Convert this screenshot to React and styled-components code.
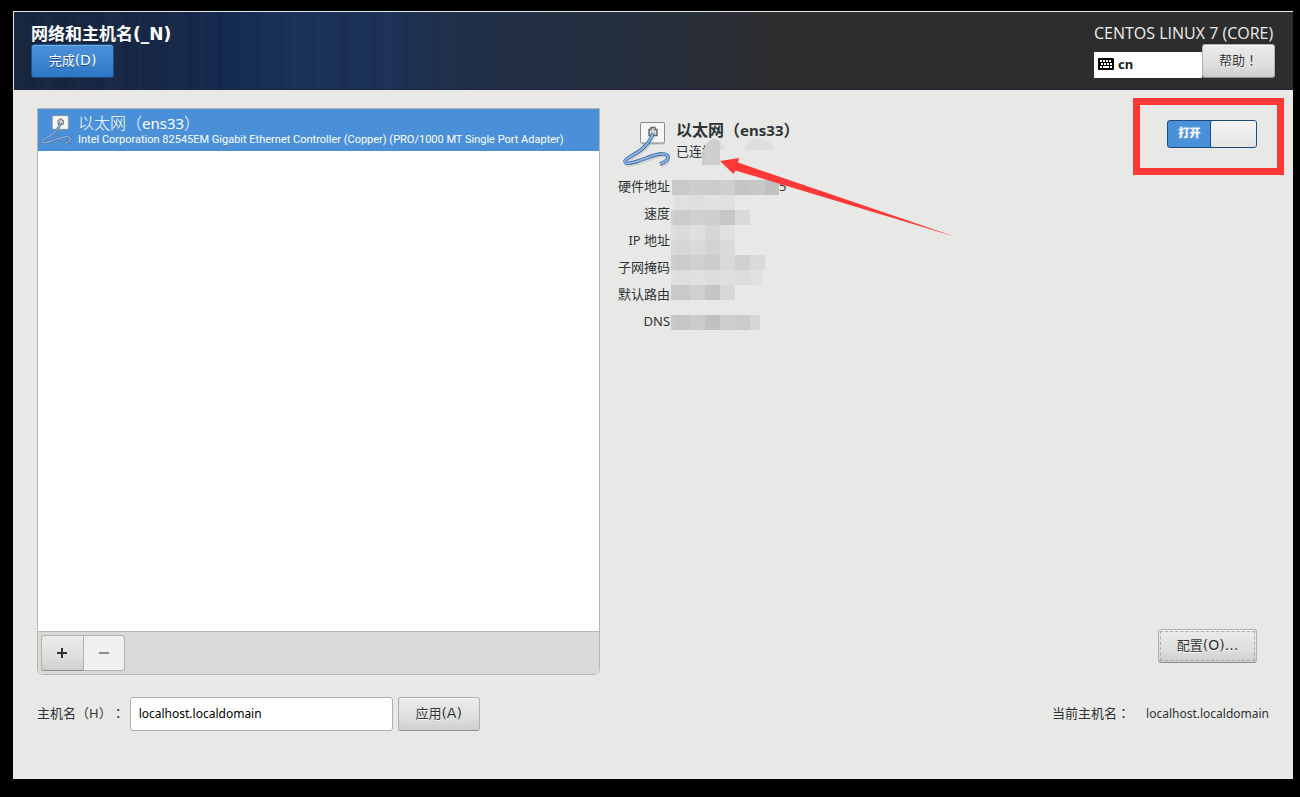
import React, { useState } from "react";
import styled, { createGlobalStyle } from "styled-components";

const GlobalStyle = createGlobalStyle`
  * { box-sizing: border-box; }
  body {
    margin: 0;
    background: #000;
    color: #2e3436;
    font-family: "Noto Sans", "Noto Sans CJK SC", sans-serif;
    font-size: 13px;
    line-height: 18px;
    text-spacing-trim: space-all;
  }
  button, input { font: inherit; color: inherit; }
  h1, h2, p, dl, dd, ul { margin: 0; padding: 0; }
`;

const Screen = styled.div`
  min-height: 100vh;
  padding: 11px 7px 18px 13px;
  display: flex;
`;

const Installer = styled.div`
  flex: 1;
  min-width: 0;
  display: flex;
  flex-direction: column;
  padding: 1px 0 0 1px;
  background: #e8e8e6;
`;

const Header = styled.header`
  display: flex;
  justify-content: space-between;
  align-items: flex-end;
  padding: 12px 18px 11px 17px;
  border-bottom: 1px solid #26233a;
  background:
    linear-gradient(90deg, transparent 380px, #222f44 530px, #242f3e 600px, #282c36 690px, #2d2d2d 780px),
    repeating-linear-gradient(90deg, rgba(60, 100, 160, 0.04) 0 3px, transparent 6px 17px, rgba(0, 0, 20, 0.06) 19px 21px, transparent 24px 31px),
    repeating-linear-gradient(90deg, transparent 0 23px, rgba(70, 110, 170, 0.03) 29px 35px, transparent 43px 67px),
    linear-gradient(90deg, #18253d 0, #172745 120px, #152a50 220px, #1a3058 270px, #1c3154 390px, #222f44 530px);
`;

const HeaderSide = styled.div`
  display: flex;
  flex-direction: column;
  align-items: flex-start;
`;

const Title = styled.h1`
  color: #fff;
  font-size: 17px;
  line-height: 20px;
  font-weight: 600;
`;

const TitleKey = styled.span`
  font-family: "DejaVu Sans", sans-serif;
`;

const ButtonKey = styled.span`
  font-family: "DejaVu Sans", sans-serif;
  font-size: 14px;
`;

const Product = styled.p`
  margin-bottom: 2px;
  color: #eee;
  font-family: "Open Sans", sans-serif;
  font-size: 16px;
  line-height: 18px;
`;

const HeaderTools = styled.div`
  display: flex;
  align-items: flex-end;
`;

const Layout = styled.div`
  display: flex;
  align-items: center;
  gap: 4px;
  width: 108px;
  height: 26px;
  padding: 0 4px 2px;
  background: #fff;
  color: #1a1a1a;
  font-weight: 700;
`;

const Button = styled.button`
  min-width: ${(p) => p.$width}px;
  height: 34px;
  padding: 0 8px 2px;
  border: 1px solid ${(p) => (p.$primary ? "#1c5187" : "#b0b0ac")};
  border-bottom-color: ${(p) => (p.$primary ? "#184a80" : "#8f8f8c")};
  border-radius: 3px;
  background: ${(p) =>
    p.$primary
      ? "linear-gradient(#4a90d9, #3f86d2 50%, #2a76c6)"
      : "linear-gradient(#ebebea, #dfdfde 60%, #cfcfcd)"};
  box-shadow: inset 0 1px ${(p) => (p.$primary ? "#76aee6" : "#f8f8f8")};
  color: ${(p) => (p.$primary ? "#fff" : "#2e3436")};
  text-shadow: 0 1px ${(p) => (p.$primary ? "#1c4a80" : "#fff")};
  ${(p) => p.$focused && "outline: 1px dashed #aaa; outline-offset: -3px;"}
`;

const Main = styled.main`
  flex: 1;
  display: flex;
  flex-direction: column;
  gap: 22px;
  padding: 18px 24px 48px 23px;
`;

const Columns = styled.div`
  flex: 1;
  display: grid;
  grid-template-columns: 6fr 7fr;
  gap: 12px;
`;

const Devices = styled.section`
  display: flex;
  flex-direction: column;
  border: 1px solid #b5b5b2;
  border-radius: 0 0 6px 6px;
  background: #fff;
  overflow: hidden;
`;

const DeviceList = styled.ul`
  flex: 1;
  list-style: none;
`;

const Device = styled.li`
  display: flex;
  align-items: center;
  gap: 6px;
  height: 42px;
  padding: 0 4px 0 2px;
  background: #4a90d9;
  color: #fff;
`;

const DeviceName = styled.p`
  font-size: 16px;
  line-height: 20px;
  font-weight: 300;
`;

const DeviceLatin = styled.span`
  font-size: 15px;
  font-weight: 400;
`;

const DeviceInfo = styled.p`
  font-family: Roboto, sans-serif;
  font-size: 11px;
  line-height: 14px;
  white-space: nowrap;
`;

const Toolbar = styled.div`
  display: flex;
  padding: 3px;
  border-top: 1px solid #b5b5b2;
  background: #d9d9d7;
`;

const ToolButton = styled.button`
  display: grid;
  place-items: center;
  width: ${(p) => (p.disabled ? 41 : 43)}px;
  height: 36px;
  padding: 0 ${(p) => (p.disabled ? 0 : 2)}px 0 0;
  border: 1px solid #b0b0ac;
  border-left-width: ${(p) => (p.disabled ? 0 : 1)}px;
  border-bottom-color: ${(p) => (p.disabled ? "#b0b0ac" : "#8f8f8c")};
  border-radius: ${(p) => (p.disabled ? "0 3px 3px 0" : "3px 0 0 3px")};
  background: ${(p) => (p.disabled ? "#f0f0f0" : "linear-gradient(#ebebea, #dfdfde 60%, #cfcfcd)")};
  color: ${(p) => (p.disabled ? "#8d9091" : "#2e3436")};
`;

const Details = styled.section`
  position: relative;
  display: flex;
  flex-direction: column;
  padding: 12px 12px 12px 0;
`;

const DetailsHead = styled.div`
  display: flex;
  align-items: flex-start;
  justify-content: space-between;
  margin-bottom: 6px;
`;

const Adapter = styled.div`
  display: flex;
  gap: 6px;
  height: 46px;
  padding-left: 10px;
`;

const AdapterName = styled.h2`
  font-size: 16px;
  line-height: 20px;
  font-weight: 700;
`;

const AdapterLatin = styled.span`
  font-size: 15px;
`;

const AdapterState = styled.p`
  line-height: 22px;
`;

const Facts = styled.dl`
  display: grid;
  grid-template-columns: 58px 1fr;
  grid-auto-rows: 27px;
  align-items: center;
`;

const FactName = styled.dt`
  text-align: right;
  white-space: nowrap;
`;

const FactValue = styled.dd`
  padding-left: 109px;
`;

const Redaction = styled.svg`
  position: absolute;
  left: 0;
  top: 0;
  pointer-events: none;
`;

const SwitchLabel = styled.label`
  position: relative;
  display: flex;
`;

const SwitchInput = styled.input`
  appearance: none;
  width: 90px;
  height: 28px;
  margin: 0;
  display: flex;
  justify-content: ${(p) => (p.checked ? "flex-end" : "flex-start")};
  border: 1px solid #1c4a7c;
  border-radius: 3px;
  background: ${(p) => (p.checked ? "#4a90d9" : "#c9c9c7")};
  &::before {
    content: "";
    width: 45px;
    border-left: 1px solid #1c4a7c;
    border-radius: 2px;
    background: linear-gradient(#f5f5f5, #e4e4e3);
  }
`;

const SwitchText = styled.span`
  position: absolute;
  left: 0;
  top: 0;
  width: 45px;
  line-height: 26px;
  text-align: center;
  font-size: 11px;
  font-weight: 700;
  color: #fff;
  text-shadow: 0 0 2px #cde;
  pointer-events: none;
`;

const Highlight = styled.span`
  position: absolute;
  inset: -22px -27px -27px -34px;
  border: 7px solid #fe3837;
  pointer-events: none;
`;

const DetailsFoot = styled.div`
  margin-top: auto;
  display: flex;
  justify-content: flex-end;
`;

const HostRow = styled.form`
  display: flex;
  align-items: center;
  justify-content: space-between;
`;

const HostGroup = styled.div`
  display: flex;
  align-items: center;
  gap: ${(p) => p.$gap}px;
`;

const HostLabel = styled.label`
  padding-bottom: 2px;
`;

const HostCaption = styled.span`
  padding-bottom: 2px;
`;

const HostValue = styled.span`
  font-size: 12px;
`;

const HostInput = styled.input`
  width: 263px;
  height: 34px;
  padding: 0 8px 2px;
  border: 1px solid #b0b0ac;
  border-radius: 3px;
  background: #fff;
  color: #000;
  font-size: 12px;
`;

const CenteredMark = styled.span`
  font-family: "Noto Sans CJK TC", sans-serif;
`;

function NetworkIcon({ size }) {
  const cable = "M31 13 C29 19 26 24 20 29 C14 34 4 38 3 41 C3 45 10 43 16 41 C25 38 35 33 41 34 C46 34 47 37 45 40 C43 42 41 43 38 44";
  return (
    <svg width={size} height={size} viewBox="0 0 48 48" fill="none" aria-hidden="true">
      <rect x="19" y="3.500" width="24" height="21" rx="1.500" fill="#777" opacity=".35" />
      <rect x="18.500" y="2.500" width="24" height="20.500" rx="1.500" fill="#f6f6f5" stroke="#8b8c87" />
      <path d="M27 15.500V9.500h2v-2h4v2h2v6z" fill="#d5d5d2" stroke="#666" strokeWidth="1.400" />
      <path d={cable} stroke="#888" strokeWidth="4" opacity=".25" transform="translate(1 1.500)" />
      <path d={cable} stroke="#3f6fae" strokeWidth="3.600" strokeLinejoin="round" />
      <path d={cable} stroke="#92b5e2" strokeWidth="1.800" strokeLinejoin="round" />
    </svg>
  );
}

function KeyboardIcon() {
  const keys = [
    [2, 3], [5, 3], [8, 3], [11, 3], [3, 6], [6, 6], [9, 6], [12, 6], [2, 9], [12, 9],
  ];
  return (
    <svg width="16" height="12" viewBox="0 0 16 12" aria-hidden="true">
      <rect width="16" height="12" rx="1" fill="#000" />
      {keys.map(([x, y]) => (
        <rect key={`${x}-${y}`} x={x} y={y - 1} width="2" height="2" fill="#fff" />
      ))}
      <rect x="5" y="8" width="6" height="2" fill="#fff" />
    </svg>
  );
}

const mosaicRows = [
  { y: 72, edges: [60, 78, 93, 108, 123, 138, 153, 167], fills: ["#c9c9c9", "#cdcdcd", "#cbcbcb", "#cfcfcf", "#c4c5c5", "#c8c8c7", "#c0c1c1"] },
  { y: 87, edges: [62, 78, 93, 108, 123], fills: ["#e0e0df", "#dededd", "#e2e2e1", "#e0e0df"] },
  { y: 102, edges: [59, 63, 78, 93, 108, 123, 138], fills: ["#d0d0d0", "#cbcbcb", "#d0d0d0", "#cfcfcf", "#c5c7c6", "#dadad9"] },
  { y: 117, edges: [59, 63, 78, 93, 108, 123], fills: ["#dfdfde", "#dbdbda", "#dfdfde", "#d6d6d6", "#e0e0df"] },
  { y: 132, edges: [59, 63, 78, 93, 108, 123], fills: ["#d9d9d8", "#d6d6d6", "#dadad9", "#d3d3d3", "#dadad9"] },
  { y: 147, edges: [59, 63, 78, 93, 108, 123, 138, 153], fills: ["#cfcfcf", "#cacbcb", "#d0d0d0", "#cccccc", "#d9d9d8", "#cfd0d0", "#dadad9"] },
  { y: 162, edges: [59, 63, 78, 93, 108, 123, 138, 150], fills: ["#e1e1e0", "#dededd", "#e0e0df", "#dcdcdb", "#dededd", "#dcdcdb", "#e0e0df"] },
  { y: 177, edges: [59, 78, 93, 108, 123], fills: ["#c8c9c9", "#d0d0d0", "#c4c6c5", "#d7d7d7"] },
  { y: 207, edges: [59, 63, 78, 93, 108, 123, 138, 148], fills: ["#cacaca", "#c5c6c6", "#cccccc", "#bfc1c0", "#cfcfcf", "#cacccb", "#d6d6d6"] },
];

function Annotations() {
  return (
    <Redaction width="360" height="230" viewBox="0 0 360 230" aria-hidden="true">
      <rect x="57" y="57" width="59" height="13" fill="#e8e8e6" />
      <path d="M108 42V33C112 36 113 40 113 42Z M132 42C134 34 140 31 147 31C155 31 161 35 163 42Z" fill="#dededd" />
      <path d="M90 57V45C92 40 94 36 97 33V57Z" fill="#c7c8c8" />
      <path d="M93 57V38C96 33 99 31 102 31C105 31 107 32 108 34V57Z" fill="#cfcfcf" />
      {mosaicRows.map(({ y, edges, fills }) =>
        fills.map((fill, i) => (
          <rect key={`${y}-${i}`} x={edges[i]} y={y} width={edges[i + 1] - edges[i]} height="15" fill={fill} />
        ))
      )}
      <path d="M108 53 L127 50 L126 54.500 L344 129 L123.500 62.500 L121.500 66 Z" fill="#fe3837" />
    </Redaction>
  );
}

export default function App() {
  const [enabled, setEnabled] = useState(true);
  const [host, setHost] = useState("localhost.localdomain");

  return (
    <>
      <GlobalStyle />
      <Screen>
        <Installer>
          <Header>
            <HeaderSide>
              <Title>网络和主机名<TitleKey>(_N)</TitleKey></Title>
              <Button type="button" $primary $width={83}>完成<ButtonKey>(D)</ButtonKey></Button>
            </HeaderSide>
            <HeaderSide>
              <Product>CENTOS LINUX 7 (CORE)</Product>
              <HeaderTools>
                <Layout><KeyboardIcon />cn</Layout>
                <Button type="button" $width={73}>帮助<CenteredMark>！</CenteredMark></Button>
              </HeaderTools>
            </HeaderSide>
          </Header>
          <Main>
            <Columns>
              <Devices>
                <DeviceList>
                  <Device>
                    <NetworkIcon size={32} />
                    <div>
                      <DeviceName>以太网（<DeviceLatin>ens33</DeviceLatin>）</DeviceName>
                      <DeviceInfo>Intel Corporation 82545EM Gigabit Ethernet Controller (Copper) (PRO/1000 MT Single Port Adapter)</DeviceInfo>
                    </div>
                  </Device>
                </DeviceList>
                <Toolbar>
                  <ToolButton type="button" aria-label="添加">
                    <svg width="12" height="12" viewBox="0 0 12 12" aria-hidden="true">
                      <path d="M1 6H11M6 1V11" stroke="currentColor" strokeWidth="2" />
                    </svg>
                  </ToolButton>
                  <ToolButton type="button" aria-label="删除" disabled>
                    <svg width="12" height="12" viewBox="0 0 12 12" aria-hidden="true">
                      <path d="M1 6H11" stroke="currentColor" strokeWidth="2" />
                    </svg>
                  </ToolButton>
                </Toolbar>
              </Devices>
              <Details>
                <DetailsHead>
                  <Adapter>
                    <NetworkIcon size={48} />
                    <div>
                      <AdapterName>以太网（<AdapterLatin>ens33</AdapterLatin>）</AdapterName>
                      <AdapterState>已连接</AdapterState>
                    </div>
                  </Adapter>
                  <SwitchLabel>
                    <SwitchInput type="checkbox" role="switch" checked={enabled} onChange={(e) => setEnabled(e.target.checked)} />
                    <SwitchText>打开</SwitchText>
                    <Highlight />
                  </SwitchLabel>
                </DetailsHead>
                <Facts>
                  <FactName>硬件地址</FactName>
                  <FactValue>5</FactValue>
                  <FactName>速度</FactName>
                  <FactValue />
                  <FactName>IP 地址</FactName>
                  <FactValue />
                  <FactName>子网掩码</FactName>
                  <FactValue />
                  <FactName>默认路由</FactName>
                  <FactValue />
                  <FactName>DNS</FactName>
                  <FactValue />
                </Facts>
                <Annotations />
                <DetailsFoot>
                  <Button type="button" $width={99} $focused>配置<ButtonKey>(O)...</ButtonKey></Button>
                </DetailsFoot>
              </Details>
            </Columns>
            <HostRow onSubmit={(e) => e.preventDefault()}>
              <HostGroup $gap={5}>
                <HostLabel htmlFor="hostname">主机名（H）<CenteredMark>：</CenteredMark></HostLabel>
                <HostInput id="hostname" value={host} onChange={(e) => setHost(e.target.value)} />
                <Button type="submit" $width={82}>应用<ButtonKey>(A)</ButtonKey></Button>
              </HostGroup>
              <HostGroup $gap={16}>
                <HostCaption>当前主机名<CenteredMark>：</CenteredMark></HostCaption>
                <HostValue>localhost.localdomain</HostValue>
              </HostGroup>
            </HostRow>
          </Main>
        </Installer>
      </Screen>
    </>
  );
}
